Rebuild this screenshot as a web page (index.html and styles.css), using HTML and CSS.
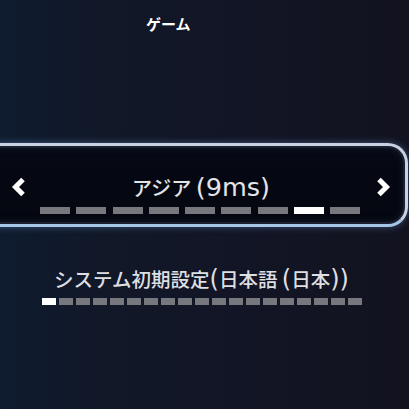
FILE: index.html
```html
<!DOCTYPE html>
<html lang="ja">
<head>
<meta charset="utf-8">
<title>ゲーム設定</title>
<link rel="stylesheet" href="styles.css">
</head>
<body>
<div class="screen">
  <header class="tabs">
    <span class="tab">ゲーム</span>
  </header>

  <section class="selector">
    <div class="sel-row">
      <svg class="chev" width="15" height="22" viewBox="0 0 15 22"><polyline points="12,3.5 4.5,11 12,18.5" fill="none" stroke="#ffffff" stroke-width="5" stroke-linejoin="miter"/></svg>
      <span class="sel-value">アジア <span class="lat">(9ms)</span></span>
      <svg class="chev" width="15" height="22" viewBox="0 0 15 22"><polyline points="3,3.5 10.5,11 3,18.5" fill="none" stroke="#ffffff" stroke-width="5" stroke-linejoin="miter"/></svg>
    </div>
    <div class="segs segs-9">
      <i class="seg"></i><i class="seg"></i><i class="seg"></i><i class="seg"></i><i class="seg"></i><i class="seg"></i><i class="seg"></i><i class="seg on"></i><i class="seg"></i>
    </div>
  </section>

  <section class="option">
    <div class="opt-label">システム初期設定<span class="lat">(</span>日本語 <span class="lat">(</span>日本<span class="lat">))</span></div>
    <div class="segs segs-19">
      <i class="seg on"></i><i class="seg"></i><i class="seg"></i><i class="seg"></i><i class="seg"></i><i class="seg"></i><i class="seg"></i><i class="seg"></i><i class="seg"></i><i class="seg"></i><i class="seg"></i><i class="seg"></i><i class="seg"></i><i class="seg"></i><i class="seg"></i><i class="seg"></i><i class="seg"></i><i class="seg"></i><i class="seg"></i>
    </div>
  </section>
</div>
</body>
</html>
```

FILE: styles.css
```css
html, body {
  margin: 0;
  padding: 0;
}
body {
  width: 409px;
  height: 409px;
  overflow: hidden;
  background: linear-gradient(90deg, #0f1b2f 0%, #111828 25%, #121525 60%, #12131f 100%);
  font-family: "Noto Sans CJK JP", "Noto Sans", sans-serif;
  color: #e6e6e8;
}
.screen {
  display: flex;
  flex-direction: column;
}
.tabs {
  display: flex;
  padding: 14px 0 0 146px;
  height: 20px;
}
.tab {
  font-size: 15px;
  line-height: 20px;
  font-weight: 700;
  color: #ffffff;
}
.selector {
  box-sizing: border-box;
  margin: 109px 0 0 -30px;
  width: 438px;
  height: 84px;
  padding: 29px 14px 10px 38px;
  border: 3px solid #c9d1e2;
  border-bottom-color: #a6c6e8;
  border-radius: 20px;
  background: linear-gradient(180deg, #060914 0%, #04070f 100%);
  box-shadow: 0 0 7px rgba(110, 160, 225, 0.45), inset 0 0 0 2px #1b2030, inset 0 0 10px rgba(60, 80, 120, 0.35);
  display: flex;
  flex-direction: column;
}
.sel-row {
  display: flex;
  justify-content: space-between;
  align-items: center;
  height: 24px;
}
.chev {
  display: block;
  flex: none;
}
.sel-value {
  font-size: 20px;
  line-height: 24px;
  font-weight: 500;
  color: #e4e4e6;
  white-space: nowrap;
}
.sel-value .lat {
  font-family: "DejaVu Sans", sans-serif;
  font-weight: 400;
  font-size: 25.5px;
  line-height: 24px;
}
.segs {
  display: flex;
  justify-content: center;
}
.seg {
  display: block;
  height: 7px;
  background: #77787e;
}
.seg.on {
  background: #ffffff;
}
.segs-9 {
  margin: 8px 2px 0 0;
  gap: 6.25px;
}
.segs-9 .seg {
  width: 30px;
}
.option {
  margin-top: 39px;
  display: flex;
  flex-direction: column;
  align-items: center;
}
.opt-label {
  font-size: 19.5px;
  line-height: 26px;
  font-weight: 500;
  color: #dedfe2;
  white-space: nowrap;
  margin-right: 6px;
}
.opt-label .lat {
  font-family: "DejaVu Sans", sans-serif;
  font-weight: 400;
  font-size: 24px;
  line-height: 26px;
}
.segs-19 {
  margin: 6px 6px 0 0;
  gap: 3px;
}
.segs-19 .seg {
  width: 14px;
}
```
